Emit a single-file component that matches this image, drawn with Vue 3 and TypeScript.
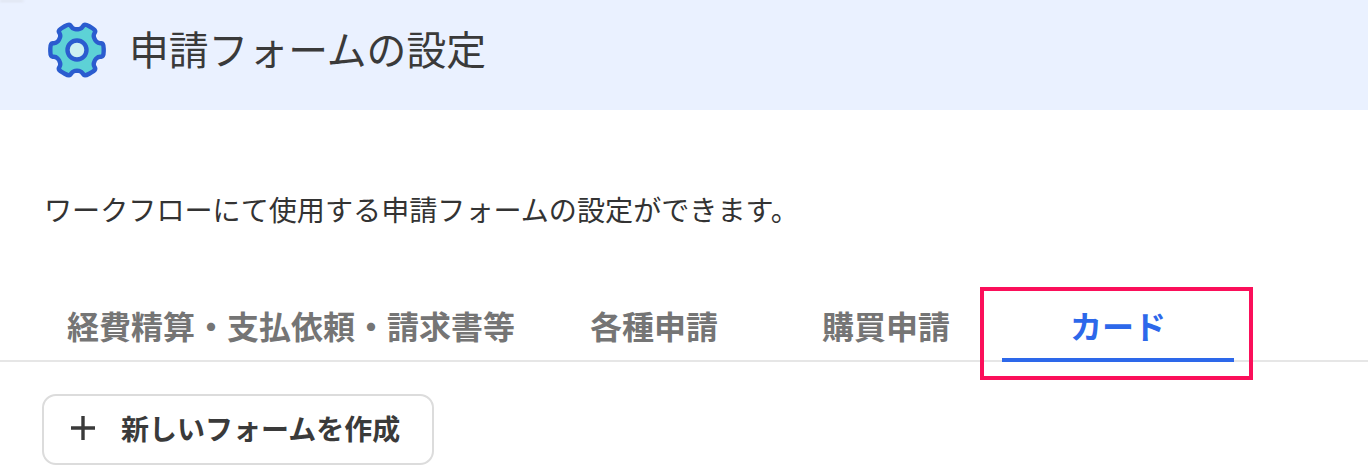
<script setup lang="ts">
const tabs: string[] = ['経費精算・支払依頼・請求書等', '各種申請', '購買申請', 'カード']
const activeTab = 'カード'

function buildGear(cx: number, cy: number): string {
  const verts: [number, number][] = []
  const polar = (r: number, deg: number): [number, number] => {
    const a = (deg * Math.PI) / 180
    return [cx + r * Math.cos(a), cy + r * Math.sin(a)]
  }
  for (let i = 0; i < 6; i++) {
    const t = i * 60
    verts.push(polar(20.5, t - 30))
    verts.push(polar(22, t - 18))
    verts.push(polar(27.5, t - 14))
    verts.push(polar(27.5, t + 14))
    verts.push(polar(22, t + 18))
  }
  const n = verts.length
  const mix = (p: [number, number], q: [number, number], f: number): string =>
    `${(p[0] + (q[0] - p[0]) * f).toFixed(2)} ${(p[1] + (q[1] - p[1]) * f).toFixed(2)}`
  let d = ''
  for (let i = 0; i < n; i++) {
    const cur = verts[i]
    const prev = verts[(i + n - 1) % n]
    const next = verts[(i + 1) % n]
    d += `${i === 0 ? 'M' : 'L'}${mix(cur, prev, 0.4)} Q${cur[0].toFixed(2)} ${cur[1].toFixed(2)} ${mix(cur, next, 0.4)} `
  }
  return d + 'Z'
}
const gearPath = buildGear(30, 28)
</script>

<template>
  <div class="page">
    <div class="corner"></div>
    <header class="header">
      <svg class="gear" viewBox="0 0 60 56" width="60" height="56" aria-hidden="true">
        <path class="gear-body" :d="gearPath" />
        <circle class="gear-hole" cx="30" cy="28" r="9.5" />
      </svg>
      <h1 class="title">申請フォームの設定</h1>
    </header>

    <p class="desc">ワークフローにて使用する申請フォームの設定ができます。</p>

    <nav class="tabs">
      <div v-for="tab in tabs" :key="tab" class="tab" :class="{ active: tab === activeTab }">
        <span>{{ tab }}</span>
        <div v-if="tab === activeTab" class="highlight"></div>
      </div>
    </nav>

    <button class="create" type="button">
      <svg class="plus" viewBox="0 0 24 24" width="24" height="24" aria-hidden="true">
        <path d="M12 0 V24 M0 12 H24" />
      </svg>
      <span>新しいフォームを作成</span>
    </button>
  </div>
</template>

<style>
html, body { margin: 0; background: #fff; overflow: hidden; }
</style>

<style scoped>
.page {
  position: relative;
  width: 1368px;
  height: 474px;
  overflow: hidden;
  background: #fff;
  color: #333;
  font-family: "Noto Sans CJK JP", "Noto Sans", sans-serif;
}
.corner {
  position: absolute;
  left: 0;
  top: 0;
  width: 24px;
  height: 2px;
  background: #dfe4ee;
  border-radius: 0 0 6px 0;
  filter: blur(1px);
}
.header {
  display: flex;
  align-items: center;
  gap: 24px;
  height: 110px;
  padding: 0 0 10px 47px;
  box-sizing: border-box;
  background: #eaf1ff;
}
.gear { flex: none; }
.gear-body { fill: #5dd2d6; stroke: #2b5ccf; stroke-width: 4.4; stroke-linejoin: round; }
.gear-hole { fill: #cdf0f2; stroke: #2b5ccf; stroke-width: 4.4; }
.title {
  margin: 0 0 0 -2px;
  padding-bottom: 4px;
  font-size: 39.8px;
  font-weight: 400;
  line-height: 56px;
  color: #3a3a3a;
}
.desc {
  margin: 0;
  padding: 79px 0 0 44px;
  font-size: 28.1px;
  line-height: 40px;
  color: #333;
}
.tabs {
  display: flex;
  margin-top: 62px;
  padding-left: 44px;
  height: 71px;
  box-sizing: border-box;
  border-bottom: 2px solid #e6e6e6;
}
.tab {
  position: relative;
  flex: none;
  min-width: 232px;
  padding: 0 23px;
  box-sizing: border-box;
  height: 69px;
  text-align: center;
  font-size: 32px;
  font-weight: 700;
  line-height: 68px;
  color: #757575;
  white-space: nowrap;
}
.tab.active {
  color: #2d68ea;
  border-bottom: 4px solid #2d68ea;
  height: 71px;
}
.highlight {
  position: absolute;
  left: -22px;
  right: -19px;
  top: -4px;
  height: 93px;
  border: 4px solid #fb0f5a;
  box-sizing: border-box;
  pointer-events: none;
}
.create {
  display: flex;
  align-items: center;
  gap: 26px;
  width: 392px;
  height: 71px;
  margin: 32px 0 0 42px;
  padding: 0 0 4px 27px;
  box-sizing: border-box;
  background: #fff;
  border: 2px solid #dcdcdc;
  border-radius: 14px;
  font-family: inherit;
  font-size: 28px;
  font-weight: 700;
  color: #3a3a3a;
}
.plus { flex: none; }
.plus path { fill: none; stroke: #3a3a3a; stroke-width: 3.4; }
</style>
